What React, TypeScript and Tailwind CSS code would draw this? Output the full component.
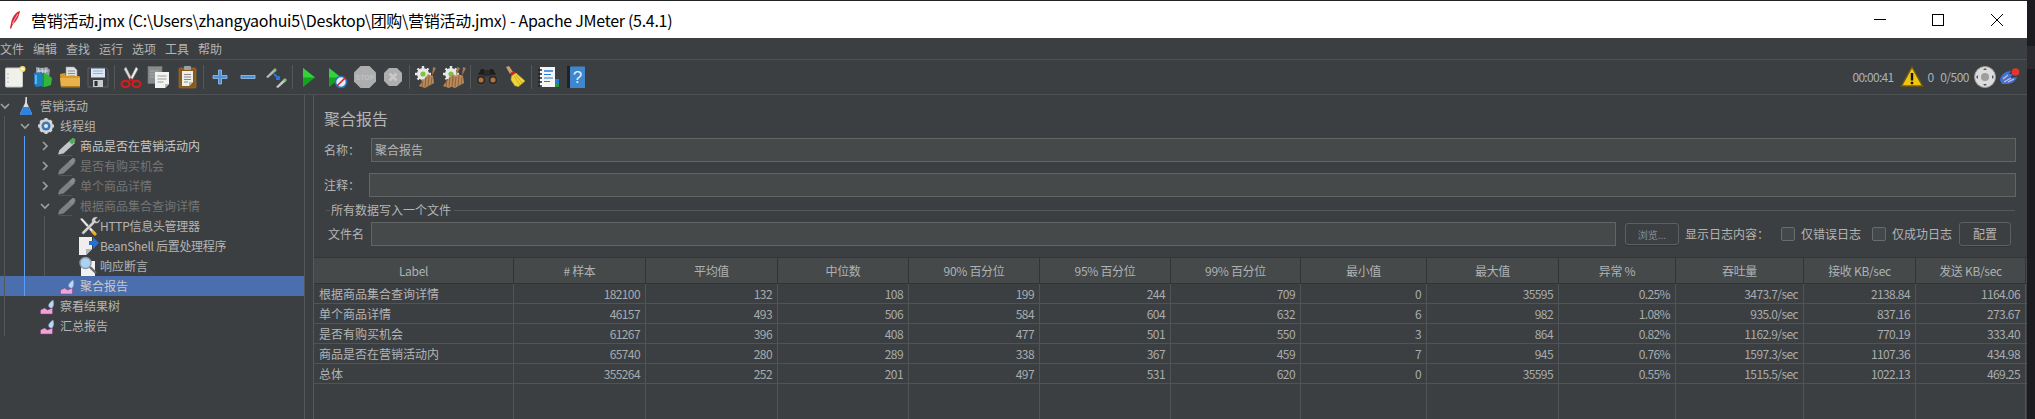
import { type ReactNode } from "react";

function Svg({ children, size = 24, box = "0 0 24 24" }: { children: ReactNode; size?: number; box?: string }) {
  return (
    <svg width={size} height={size} viewBox={box} className="shrink-0 overflow-visible">
      {children}
    </svg>
  );
}

function NewIcon() {
  return (
    <Svg>
      <rect x="3.5" y="3" width="17" height="19" rx="1" fill="#f1f1ec" stroke="#c9c9c4" />
      <circle cx="6" cy="9" r=".7" fill="#aaa" />
      <circle cx="6" cy="13" r=".7" fill="#aaa" />
      <circle cx="6" cy="17" r=".7" fill="#aaa" />
      <circle cx="20.5" cy="4" r="3" fill="#f5e27c" />
      <circle cx="20.5" cy="4" r="1.3" fill="#fffbe0" />
    </Svg>
  );
}

function TemplatesIcon() {
  return (
    <Svg>
      <path d="M6 2l6 1 5-1 3 3-1 7H6z" fill="#8f9aa5" />
      <path d="M8 3l2 6M12 3l1 7M16 3l-1 7M7 6h11" stroke="#d5dbe0" fill="none" />
      <path d="M4 8l8-1v14l-6 1-2-3z" fill="#1f7fc4" />
      <path d="M12 9l3-1 7 5-1 7-6 2-3-1z" fill="#35b43a" />
      <path d="M12 8h2v14h-2z" fill="#0f8f78" />
      <path d="M6 10v9" stroke="#7cc3ee" strokeWidth="1.5" />
    </Svg>
  );
}

function OpenIcon() {
  return (
    <Svg>
      <path d="M8 2h8l3 3v9H8z" fill="#dfe2e4" stroke="#9a9a9a" strokeWidth=".6" />
      <path d="M10 6h7M10 8.5h7M10 11h7" stroke="#8c8c8c" />
      <path d="M2 9l5-1 1 3h13l1 1v10H3z" fill="#d79a2b" />
      <path d="M2 13h20v9H3z" fill="#eab24a" />
      <path d="M3 22h19" stroke="#9a6a14" strokeWidth="1.5" />
    </Svg>
  );
}

function SaveIcon() {
  return (
    <Svg>
      <path d="M2 3h18l2 2v17H2z" fill="#3b3e42" stroke="#6a6d70" strokeWidth=".7" />
      <rect x="5" y="3.5" width="14" height="9" fill="#dbe7f4" />
      <path d="M7 6h10M7 8.500h10" stroke="#8ab2dc" />
      <rect x="7" y="15" width="10" height="7" fill="#c9cccf" />
      <rect x="8.500" y="16" width="3" height="5" fill="#2a2c2e" />
    </Svg>
  );
}

function CutIcon() {
  return (
    <Svg>
      <path d="M7 2l6 12-2 1L5 4z" fill="#dcdcdc" stroke="#8a8a8a" strokeWidth=".5" />
      <path d="M17 2l-6 12 2 1L19 4z" fill="#f0f0f0" stroke="#8a8a8a" strokeWidth=".5" />
      <ellipse cx="6.500" cy="19" rx="4" ry="3.200" fill="none" stroke="#cf1e1e" strokeWidth="2.200" />
      <ellipse cx="17.500" cy="19" rx="4" ry="3.200" fill="none" stroke="#cf1e1e" strokeWidth="2.200" />
      <path d="M10 16l2-2 2 2" stroke="#cf1e1e" strokeWidth="1.800" fill="none" />
    </Svg>
  );
}

function CopyIcon() {
  return (
    <Svg>
      <rect x="1" y="1.500" width="14" height="17" fill="#8a8d8f" stroke="#777" strokeWidth=".6" />
      <path d="M3 6h9M3 9h9M3 12h9" stroke="#a8aaac" />
      <path d="M8 7h14v12l-4 4H8z" fill="#f3f3f1" />
      <path d="M18 23v-4h4z" fill="#b9b9b7" />
      <path d="M10.500 11h9M10.500 14h9M10.500 17h6" stroke="#9b9b9b" />
    </Svg>
  );
}

function PasteIcon() {
  return (
    <Svg>
      <rect x="4" y="3" width="17" height="20" rx="1" fill="#8a5a1c" stroke="#a8722c" strokeWidth=".6" />
      <path d="M7 6h11v11l-4 4H7z" fill="#efefe9" />
      <path d="M14 21v-4h4z" fill="#bcbcb6" />
      <rect x="9" y="1" width="7" height="4" rx="1" fill="#9da1a4" />
      <path d="M9 9.500h7M9 12h7M9 14.500h7M9 17h4" stroke="#8a8a8a" />
    </Svg>
  );
}

function PlusIcon() {
  return (
    <Svg>
      <path d="M10.500 5h3v5.500H19v3h-5.500V19h-3v-5.500H5v-3h5.500z" fill="#4b94dc" stroke="#a8cdf0" strokeWidth=".7" />
    </Svg>
  );
}

function MinusIcon() {
  return (
    <Svg>
      <rect x="5" y="10.500" width="14" height="3" fill="#4b94dc" stroke="#a8cdf0" strokeWidth=".7" />
    </Svg>
  );
}

function ToggleIcon() {
  return (
    <Svg>
      <path d="M2 12l8-8 2 2-8 7z" fill="#b5b8ba" />
      <path d="M9 5l2-2 2 2-2 2z" fill="#7fbf6a" />
      <path d="M12 22l8-8 2 2-8 7z" fill="#c7c9cb" />
      <path d="M19 15l2-2 2 2-2 2z" fill="#7fbf6a" />
      <path d="M10 9l5 5M15 11v3h-3" stroke="#2a78d8" strokeWidth="1.800" fill="none" />
    </Svg>
  );
}

function StartIcon() {
  return (
    <Svg>
      <path d="M6 3l12 9.500L6 22z" fill="#12a51e" />
      <path d="M6 3l12 9.500H6z" fill="#35d23f" />
    </Svg>
  );
}

function StartNoTimersIcon() {
  return (
    <Svg>
      <path d="M4 3l12 9.500L4 22z" fill="#12a51e" />
      <path d="M4 3l12 9.500H4z" fill="#35d23f" />
      <circle cx="16" cy="17" r="5.500" fill="#e6edf5" stroke="#2f6fc0" strokeWidth="1.600" />
      <path d="M12 21l8-8" stroke="#d92020" strokeWidth="1.600" />
    </Svg>
  );
}

function StopIcon() {
  return (
    <Svg box="0 0 24 24">
      <path d="M7.500 1h9L23 7.500v9L16.500 23h-9L1 16.500v-9z" fill="#aeaeae" />
      <text x="12" y="15" textAnchor="middle" fontSize="7" fontWeight="700" fill="#c0c0c0" fontFamily="Liberation Sans">STOP</text>
    </Svg>
  );
}

function ShutdownIcon() {
  return (
    <Svg size={20} box="0 0 20 20">
      <path d="M6 1h8l5 5v8l-5 5H6l-5-5V6z" fill="#aeaeae" />
      <path d="M6.500 6.500l7 7M13.500 6.500l-7 7" stroke="#c9c9c9" strokeWidth="2.500" />
    </Svg>
  );
}

function GearShape() {
  return (
    <g>
      <circle cx="9" cy="9" r="6" fill="#e8e8e8" />
      <g stroke="#e8e8e8" strokeWidth="2.400">
        <path d="M9 1v16M1 9h16M3.500 3.500l11 11M14.500 3.500l-11 11" />
      </g>
      <circle cx="9" cy="9" r="2.600" fill="#79c43d" />
    </g>
  );
}

function Brush({ x = 0 }: { x?: number }) {
  return (
    <g transform={`translate(${x} 0)`}>
      <path d="M19 2l3 1-4 8z" fill="#a9774a" />
      <path d="M14 9l5 2 1 7-9 5-6-2z" fill="#b98b5e" />
      <path d="M9 14l-1 8M12 12l-1 10M15 11l-1 10M18 12l-1 8" stroke="#8d6238" />
    </g>
  );
}

function ClearIcon() {
  return (
    <Svg>
      <GearShape />
      <Brush />
    </Svg>
  );
}

function ClearAllIcon() {
  return (
    <Svg>
      <GearShape />
      <Brush x={-4} />
      <Brush x={2} />
    </Svg>
  );
}

function FindIcon() {
  return (
    <Svg>
      <path d="M8 5h8v6H8z" fill="#2a2a2a" />
      <path d="M3 10l3-6h3v6z" fill="#1d1d1d" />
      <path d="M21 10l-3-6h-3v6z" fill="#1d1d1d" />
      <circle cx="6" cy="15" r="5" fill="#2a2a2a" stroke="#555" strokeWidth=".6" />
      <circle cx="18" cy="15" r="5" fill="#2a2a2a" stroke="#555" strokeWidth=".6" />
      <circle cx="6" cy="15" r="2.500" fill="#b5743c" />
      <circle cx="18" cy="15" r="2.500" fill="#b5743c" />
    </Svg>
  );
}

function BroomIcon() {
  return (
    <Svg>
      <path d="M3 2l3-1 4 6-3 2z" fill="#c9a069" />
      <path d="M7 8l4-2 1.500 2-4 2.500z" fill="#d32626" />
      <path d="M8.500 11l4.500-3 9 8-7 6-1-1-2 0-4-6z" fill="#efd53a" stroke="#bfa21a" strokeWidth=".6" />
      <path d="M11 11l6 9M13 10l6 8" stroke="#c7aa22" />
    </Svg>
  );
}

function FunctionIcon() {
  return (
    <Svg>
      <rect x="4" y="2" width="15" height="20" fill="#f5f5f5" />
      <path d="M2 5h4M2 9h4M2 13h4M2 17h4M2 21h4" stroke="#1f1f1f" strokeWidth="1.500" />
      <path d="M8 6h9" stroke="#2a78d8" strokeWidth="1.500" />
      <path d="M8 9.500h7M8 13h9M8 16.500h6" stroke="#2a78d8" />
      <rect x="19" y="14" width="4" height="4" fill="#2a78d8" />
      <rect x="19" y="18" width="4" height="4" fill="#1f9a3a" />
    </Svg>
  );
}

function HelpIcon() {
  return (
    <Svg>
      <rect x="3" y="1" width="4" height="22" fill="#202224" />
      <rect x="6" y="1.500" width="15" height="21.500" fill="#3f86cf" />
      <text x="13.500" y="18" textAnchor="middle" fontSize="17" fill="#e5eef7" fontFamily="Liberation Sans">?</text>
    </Svg>
  );
}

function WarningIcon() {
  return (
    <Svg size={24}>
      <path d="M12 2l10.500 19h-21z" fill="#f2c40f" stroke="#6d5c10" strokeWidth="1.400" />
      <rect x="10.800" y="8" width="2.400" height="7.500" fill="#111" />
      <rect x="10.800" y="16.800" width="2.400" height="2.400" fill="#111" />
    </Svg>
  );
}

function RemoteIcon() {
  return (
    <Svg>
      <circle cx="12" cy="12" r="10.500" fill="#dcdcdc" />
      <circle cx="12" cy="12" r="10.500" fill="none" stroke="#9b9b9b" />
      <circle cx="12" cy="12" r="4" fill="#9e9e9e" />
      <path d="M12 3l2 2h-4zM12 21l2-2h-4zM3 12l2-2v4zM21 12l-2-2v4z" fill="#555" />
    </Svg>
  );
}

function LogoIcon() {
  return (
    <Svg>
      <path d="M2 15c1-6 6-9 11-9l-2 3 4 0-3 4 7-1c-2 5-6 7-10 7H4z" fill="#3c74d6" />
      <path d="M5 14l5-4M6 17l7-4M10 17l6-3" stroke="#e6b6c8" strokeWidth="1.200" />
      <circle cx="17.500" cy="7" r="3.800" fill="#e5342d" />
    </Svg>
  );
}

function Flask() {
  return (
    <Svg size={20} box="0 0 20 20">
      <path d="M5.500 1h1.500v6l4.500 9.500a1.500 1.500 0 01-1.300 2.500H1.800A1.500 1.500 0 01.500 16.500L5 7z" fill="#d8dadd" />
      <path d="M3.100 11h5.800l2.600 5.500a1.500 1.500 0 01-1.300 2.500H1.800A1.500 1.500 0 01.500 16.500z" fill="#2f82de" />
    </Svg>
  );
}

function ThreadGear() {
  return (
    <Svg size={20} box="3 0 20 20">
      <g stroke="#cfcfcf" strokeWidth="3">
        <path d="M9 2v16M1 10h16M3.500 4.500l11 11M14.500 4.500l-11 11" />
      </g>
      <circle cx="9" cy="10" r="7" fill="#d6d6d6" />
      <circle cx="9" cy="10" r="4.500" fill="#3e76b8" />
      <circle cx="9" cy="10" r="2" fill="#dfe8f2" />
    </Svg>
  );
}

function Pipette({ on }: { on: boolean }) {
  return (
    <Svg size={20} box="3 0 20 20">
      <path d="M1 18.500l1.500-4.500L14 3.500 18 7 6.500 17.500z" fill={on ? "#c4c7c9" : "#808080"} />
      <path d="M12 5.500l3-3c1.500-1.500 4.500 1.500 3 3l-3 3z" fill={on ? "#4fae58" : "#8a8a8a"} />
      <path d="M2 19.500h13" stroke="#555" strokeWidth=".8" />
    </Svg>
  );
}

function Tools() {
  return (
    <Svg size={20} box="2 0 20 20">
      <path d="M2 3l2-1 14 15-2 2z" fill="#ededed" stroke="#555" strokeWidth=".4" />
      <path d="M17 1l3 0-3 3 2 2 3-3c0 3-2 5-5 4L6 18c-1 1-3-1-2-2L14 6c-1-2 1-5 3-5z" fill="#cfcfcf" stroke="#555" strokeWidth=".4" />
      <path d="M15 14l4 4-2 2-4-4z" fill="#eab11c" />
    </Svg>
  );
}

function BeanShell() {
  return (
    <Svg size={20} box="2 0 20 20">
      <path d="M1 1h13v12l-6 6H1z" fill="#eeeeee" />
      <path d="M8 19v-6h6z" fill="#b5b5b5" />
      <path d="M11 5h4V1l6 6-6 6V9h-4z" fill="#2271d9" />
    </Svg>
  );
}

function Magnifier() {
  return (
    <Svg size={20} box="2 0 20 20">
      <rect x="3" y="5" width="14" height="15" fill="#f1f1f1" />
      <circle cx="7.500" cy="7" r="5.500" fill="#a9d3f5" stroke="#8e9aa5" strokeWidth="1.400" />
      <path d="M12 11l6 6" stroke="#6a6a6a" strokeWidth="2.400" />
    </Svg>
  );
}

function Listener() {
  return (
    <Svg size={20} box="0 0 20 20">
      <path d="M0.500 18v-4l4-2 3 2 5-2v6z" fill="#eea4d8" stroke="#7c3f6a" strokeWidth=".5" />
      <path d="M13 4c1 3 1 6-1 8-3 0-4-2-3-4 1-1 2-3 4-4z" fill="#bcd8f8" stroke="#7fa2c8" strokeWidth=".5" />
    </Svg>
  );
}

function Sep() {
  return (
    <div className="flex h-[24px] w-[5px] justify-center">
      <div className="h-full w-px bg-[#55585a]" />
    </div>
  );
}

function Tool({ children }: { children: ReactNode }) {
  return <div className="flex h-[34px] w-[28px] items-center justify-center">{children}</div>;
}

function Toolbar() {
  const groups = [
    [<NewIcon />, <TemplatesIcon />, <OpenIcon />, <SaveIcon />],
    [<CutIcon />, <CopyIcon />, <PasteIcon />],
    [<PlusIcon />, <MinusIcon />, <ToggleIcon />],
    [<StartIcon />, <StartNoTimersIcon />, <StopIcon />, <ShutdownIcon />],
    [<ClearIcon />, <ClearAllIcon />],
    [<FindIcon />, <BroomIcon />],
    [<FunctionIcon />, <HelpIcon />],
  ];
  return (
    <div className="flex h-[36px] items-center border-y border-[#4e5153] bg-[#3c3f41] pr-[5px]">
      {groups.map((group, i) => (
        <div key={i} className="flex items-center">
          {i > 0 && <Sep />}
          {group.map((icon, j) => (
            <Tool key={j}>{icon}</Tool>
          ))}
        </div>
      ))}
      <div className="ml-auto flex items-center text-[12px] text-[#a9b3bd]">
        <span className="tracking-[-0.7px]">00:00:41</span>
        <div className="ml-[7px]">
          <WarningIcon />
        </div>
        <span className="ml-[3px]">0</span>
        <span className="ml-[6px] tracking-[-0.5px]">0/500</span>
        <div className="ml-[4px]">
          <RemoteIcon />
        </div>
        <div className="ml-[1px]">
          <LogoIcon />
        </div>
      </div>
    </div>
  );
}

type TreeRow = {
  label: string;
  depth: number;
  chevron?: "open" | "closed";
  icon: ReactNode;
  disabled?: boolean;
  selected?: boolean;
  bright?: boolean;
  tight?: boolean;
};

const treeRows: TreeRow[] = [
  { label: "营销活动", depth: 0, chevron: "open", icon: <Flask /> },
  { label: "线程组", depth: 1, chevron: "open", icon: <ThreadGear /> },
  { label: "商品是否在营销活动内", depth: 2, chevron: "closed", icon: <Pipette on />, bright: true },
  { label: "是否有购买机会", depth: 2, chevron: "closed", icon: <Pipette on={false} />, disabled: true },
  { label: "单个商品详情", depth: 2, chevron: "closed", icon: <Pipette on={false} />, disabled: true },
  { label: "根据商品集合查询详情", depth: 2, chevron: "open", icon: <Pipette on={false} />, disabled: true },
  { label: "HTTP信息头管理器", depth: 3, icon: <Tools />, tight: true },
  { label: "BeanShell 后置处理程序", depth: 3, icon: <BeanShell />, tight: true },
  { label: "响应断言", depth: 3, icon: <Magnifier /> },
  { label: "聚合报告", depth: 2, icon: <Listener />, selected: true },
  { label: "察看结果树", depth: 1, icon: <Listener /> },
  { label: "汇总报告", depth: 1, icon: <Listener /> },
];

function Chevron({ dir }: { dir: "open" | "closed" }) {
  return (
    <svg width="10" height="10" viewBox="0 0 10 10">
      <path
        d={dir === "open" ? "M1 3l4 4 4-4" : "M3 1l4 4-4 4"}
        fill="none"
        stroke="#a0a0a0"
        strokeWidth="1.600"
      />
    </svg>
  );
}

function Guide({ color }: { color: string }) {
  return (
    <div className="h-full w-[20px] shrink-0 pl-[4px]">
      <div className={`h-full w-px ${color}`} />
    </div>
  );
}

function Tree() {
  return (
    <div className="flex w-[304px] shrink-0 flex-col pt-px">
      {treeRows.map((row) => (
        <div
          key={row.label}
          className={`flex h-[20px] items-center ${row.selected ? "bg-[#4b6eaf]" : ""}`}
        >
          {row.depth > 0 && <Guide color="bg-[#55585a]" />}
          {row.depth > 1 && <Guide color="bg-[#589df6]" />}
          {row.depth > 2 && <Guide color="bg-[#55585a]" />}
          <div className="flex w-[20px] shrink-0 items-center">
            {row.chevron && <Chevron dir={row.chevron} />}
          </div>
          {row.icon}
          <span
            className={`whitespace-nowrap text-[12px] ${row.tight ? "tracking-[-0.3px]" : ""} ${
              row.disabled ? "text-[#747474]" : row.bright || row.selected ? "text-[#c8c8c8]" : "text-[#b4b4b4]"
            }`}
          >
            {row.label}
          </span>
        </div>
      ))}
    </div>
  );
}

const columns = "grid-cols-[200px_132px_132px_131px_131px_131px_130px_126px_132px_117px_128px_112px_110px]";

const headers = ["Label", "# 样本", "平均值", "中位数", "90% 百分位", "95% 百分位", "99% 百分位", "最小值", "最大值", "异常 %", "吞吐量", "接收 KB/sec", "发送 KB/sec"];

const rows = [
  ["根据商品集合查询详情", "182100", "132", "108", "199", "244", "709", "0", "35595", "0.25%", "3473.7/sec", "2138.84", "1164.06"],
  ["单个商品详情", "46157", "493", "506", "584", "604", "632", "6", "982", "1.08%", "935.0/sec", "837.16", "273.67"],
  ["是否有购买机会", "61267", "396", "408", "477", "501", "550", "3", "864", "0.82%", "1162.9/sec", "770.19", "333.40"],
  ["商品是否在营销活动内", "65740", "280", "289", "338", "367", "459", "7", "945", "0.76%", "1597.3/sec", "1107.36", "434.98"],
  ["总体", "355264", "252", "201", "497", "531", "620", "0", "35595", "0.55%", "1515.5/sec", "1022.13", "469.25"],
];

function ReportTable() {
  return (
    <div className="mt-[11px] flex flex-1 flex-col border-t border-[#323435] text-[12px] text-[#b4b4b4]">
      <div className={`grid h-[26px] ${columns} border-b border-[#323435] bg-[#45494a]`}>
        {headers.map((h) => (
          <div key={h} className="flex items-center justify-center border-r border-[#323435] tracking-[-0.3px] text-[#aeb2b4]">
            {h}
          </div>
        ))}
      </div>
      {rows.map((row) => (
        <div key={row[0]} className={`grid h-[20px] ${columns} border-b border-[#515456]`}>
          {row.map((cell, i) =>
            i === 0 ? (
              <div key={i} className="flex items-center border-r border-[#515456] pl-[5px]">
                {cell}
              </div>
            ) : (
              <div key={i} className="flex items-center justify-end border-r border-[#515456] pr-[5px] tracking-[-0.6px] text-[#a8acae]">
                {cell}
              </div>
            ),
          )}
        </div>
      ))}
      <div className={`grid flex-1 ${columns}`}>
        {headers.map((h) => (
          <div key={h} className="border-r border-[#515456]" />
        ))}
      </div>
    </div>
  );
}

function Field({ text }: { text?: string }) {
  return (
    <div className="flex h-[24px] min-w-0 flex-1 items-center border border-[#646464] bg-[#45494a] pl-[3px] text-[12px] text-[#b4b4b4]">
      {text}
    </div>
  );
}

function Check({ label }: { label: string }) {
  return (
    <div className="flex items-center">
      <div className="h-[14px] w-[14px] rounded-[2px] border border-[#6b6b6b] bg-[#43494a]" />
      <span className="ml-[6px] whitespace-nowrap">{label}</span>
    </div>
  );
}

function ReportPanel() {
  return (
    <div className="flex w-[1714px] shrink-0 flex-col border-l border-[#555759] pt-[11px] text-[12px] text-[#b4b4b4]">
      <div className="pl-[10px] text-[16px] leading-[24px] text-[#b4b4b4]">聚合报告</div>
      <div className="mr-[11px] mt-[8px] flex items-center">
        <span className="w-[57px] shrink-0 pl-[10px]">名称：</span>
        <Field text="聚合报告" />
      </div>
      <div className="mr-[11px] mt-[11px] flex items-center">
        <span className="w-[55px] shrink-0 pl-[10px]">注释：</span>
        <Field />
      </div>
      <div className="mr-[12px] mt-[5px] flex h-[16px] items-center pl-[12px]">
        <div className="h-px w-[4px] bg-[#55585a]" />
        <span className="mx-[1px] whitespace-nowrap">所有数据写入一个文件</span>
        <div className="ml-[2px] h-px flex-1 bg-[#55585a]" />
      </div>
      <div className="mr-[16px] mt-[4px] flex h-[24px] items-center">
        <span className="w-[57px] shrink-0 pl-[14px]">文件名</span>
        <Field />
        <div className="ml-[9px] flex h-[22px] w-[54px] shrink-0 items-center justify-center rounded-[3px] border border-[#5e6060] text-[10px] text-[#8a8d8f] shadow-[0_1px_0_#323435]">
          浏览...
        </div>
        <span className="ml-[6px] whitespace-nowrap">显示日志内容：</span>
        <div className="ml-[12px]">
          <Check label="仅错误日志" />
        </div>
        <div className="ml-[11px]">
          <Check label="仅成功日志" />
        </div>
        <div className="ml-[7px] flex h-[24px] w-[52px] shrink-0 items-center justify-center rounded-[3px] border border-[#5e6060] text-[12px] shadow-[0_1px_0_#323435]">
          配置
        </div>
      </div>
      <ReportTable />
    </div>
  );
}

function TitleBar() {
  return (
    <div className="flex h-[38px] items-center border-t border-[#222222] bg-white text-black">
      <svg width="12" height="18" viewBox="0 0 12 18" className="ml-[9px]">
        <path d="M11 0C7 1 4 5 2.500 10L1 17l1 1 2-5c3-2 6-7 7-13z" fill="#d8232a" />
        <path d="M9 3C7 6 5 9 3.500 13" stroke="#f39ac0" strokeWidth="1.200" fill="none" />
      </svg>
      <span className="ml-[10px] whitespace-nowrap text-[16px] tracking-[-0.28px]">
        营销活动.jmx (C:\Users\zhangyaohui5\Desktop\团购\营销活动.jmx) - Apache JMeter (5.4.1)
      </span>
      <div className="ml-auto flex items-center">
        <div className="h-px w-[12px] bg-black" />
        <div className="ml-[46px] h-[12px] w-[12px] border border-black" />
        <svg width="12" height="12" viewBox="0 0 12 12" className="ml-[47px] mr-[24px]">
          <path d="M0 0l12 12M12 0L0 12" stroke="black" strokeWidth="1" />
        </svg>
      </div>
    </div>
  );
}

export default function App() {
  const menus = ["文件", "编辑", "查找", "运行", "选项", "工具", "帮助"];
  return (
    <div className="flex h-[419px] w-[2035px] overflow-hidden bg-[#1c1c20] font-['Noto_Sans_CJK_SC','Noto_Sans',sans-serif]">
      <div className="flex w-[2027px] shrink-0 flex-col bg-[#3c3f41]">
        <TitleBar />
        <div className="flex h-[21px] items-center gap-[9px] bg-[#3c3f41] text-[12px] text-[#b4b4b4]">
          {menus.map((m) => (
            <span key={m}>{m}</span>
          ))}
        </div>
        <Toolbar />
        <div className="flex flex-1 overflow-hidden">
          <Tree />
          <div className="w-[9px] shrink-0 border-l border-[#555759]" />
          <ReportPanel />
        </div>
      </div>
      <div className="flex flex-1 flex-col">
        <div className="h-[46px]" />
        <div className="h-[23px] bg-[#2a2a30]" />
      </div>
    </div>
  );
}
